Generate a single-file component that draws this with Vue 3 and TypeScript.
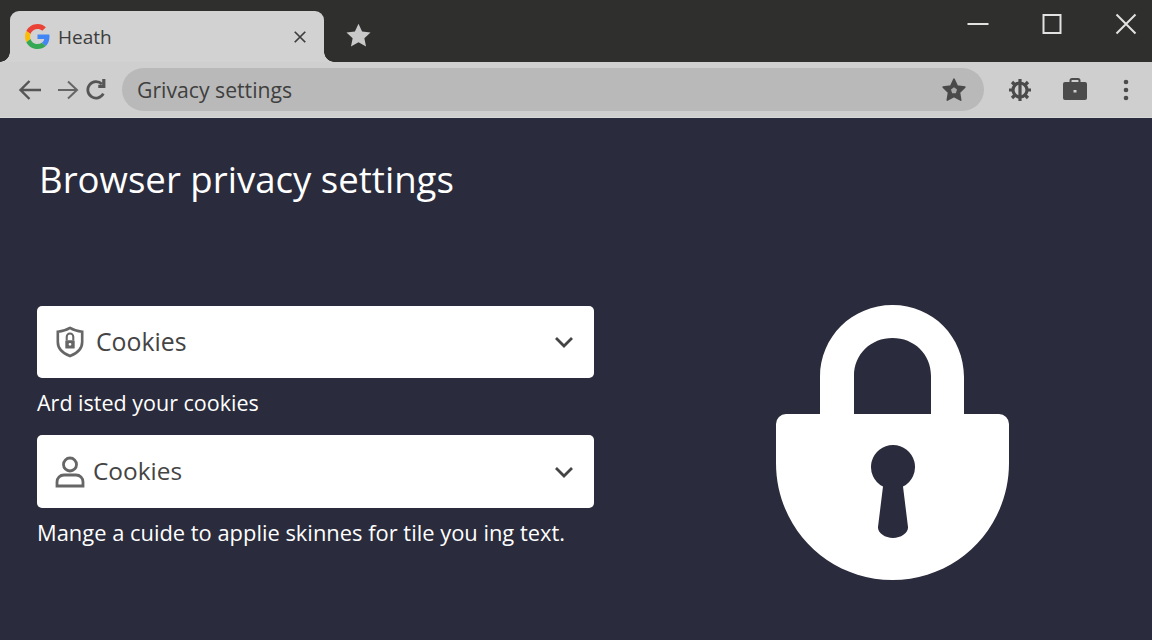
<template>
  <div class="page">
    <header class="titlebar">
      <div class="tab">
        <svg class="favicon" viewBox="0 0 48 48">
          <path fill="#ea4335" d="M24 9.500c3.500 0 6.700 1.200 9.200 3.600l6.900-6.900C35.900 2.400 30.500 0 24 0 14.600 0 6.500 5.400 2.600 13.200l8 6.200C12.500 13.700 17.800 9.500 24 9.500z" />
          <path fill="#4285f4" d="M47 24.500c0-1.600-.1-3.100-.4-4.500H24v9h13c-.6 3-2.300 5.500-4.800 7.200l7.700 6C44.400 38 47 31.800 47 24.500z" />
          <path fill="#fbbc05" d="M10.500 28.600c-.5-1.400-.8-3-.8-4.600s.3-3.200.8-4.600l-8-6.200C.9 16.500 0 20.100 0 24s.9 7.500 2.600 10.800l7.900-6.200z" />
          <path fill="#34a853" d="M24 48c6.500 0 11.900-2.100 15.900-5.800l-7.700-6c-2.200 1.500-4.900 2.300-8.200 2.300-6.200 0-11.500-4.200-13.400-9.900l-8 6.200C6.500 42.600 14.600 48 24 48z" />
        </svg>
        <span class="tab-title">Heath</span>
        <svg class="tab-close" viewBox="0 0 16 16">
          <path d="M2 2l12 12M14 2L2 14" />
        </svg>
      </div>
      <svg class="new-star" viewBox="0 0 24 24">
        <path d="M12 1.500l3.200 6.900 7.500.9-5.500 5.100 1.500 7.400-6.700-3.700-6.700 3.700 1.500-7.400-5.500-5.100 7.500-.9z" />
      </svg>
      <div class="window-controls">
        <svg viewBox="0 0 24 24" class="win-icon"><path d="M1.500 12h21" /></svg>
        <svg viewBox="0 0 24 24" class="win-icon"><rect x="3.500" y="3" width="17" height="18" /></svg>
        <svg viewBox="0 0 24 24" class="win-icon"><path d="M2.500 2.500l19 19M21.500 2.500l-19 19" /></svg>
      </div>
    </header>

    <nav class="toolbar">
      <div class="nav-buttons">
        <svg class="nav-icon" viewBox="0 0 24 24"><path d="M23 12H3M11.500 3L2.500 12l9 9" /></svg>
        <svg class="nav-icon light" viewBox="0 0 24 24"><path d="M3 12h19M13 3.500l9 8.500-9 8.500" /></svg>
        <svg class="nav-icon reload" viewBox="0 0 24 24"><path d="M18.500 5.500A9 9 0 1 0 20 16" /><path class="flag" d="M20.500 0v8h-6" /></svg>
      </div>
      <div class="address">
        <span class="address-text">Grivacy settings</span>
        <svg class="address-star" viewBox="0 0 24 24">
          <path d="M12 2l3 6.300 7 1-5 5 1.200 7-6.200-3.200-6.200 3.200 1.200-7-5-5 7-1z" />
          <path class="star-hole" d="M12 9.500l-2.800 2.100 1.100 3.400h3.400l1.100-3.400z" />
        </svg>
      </div>
      <div class="toolbar-actions">
        <svg class="action gear" viewBox="0 0 24 24">
          <circle cx="12" cy="12" r="7" />
          <path d="M12 1v22M1 12h3.500M19.500 12H23M4 4l3 3M20 4l-3 3M4 20l3-3M20 20l-3-3" />
        </svg>
        <svg class="action case" viewBox="0 0 26 26">
          <path class="handle" d="M8.500 6V3.500a1.500 1.500 0 0 1 1.500-1.500h6a1.500 1.500 0 0 1 1.500 1.500V6" />
          <path fill-rule="evenodd" d="M3 5h20a2 2 0 0 1 2 2v14a2 2 0 0 1-2 2H3a2 2 0 0 1-2-2V7a2 2 0 0 1 2-2zM11.500 13v2.500h3V13z" />
        </svg>
        <svg class="action dots" viewBox="0 0 6 22">
          <circle cx="3" cy="3" r="2.300" />
          <circle cx="3" cy="11" r="2.300" />
          <circle cx="3" cy="19" r="2.300" />
        </svg>
      </div>
    </nav>

    <main class="content">
      <section class="settings">
        <h1 class="heading">Browser privacy settings</h1>
        <div class="card">
          <svg class="card-icon shield" viewBox="0 0 32 34">
            <path class="line" d="M16 2c4 2.500 8 3.500 13 4v11c0 7-5 12-13 15C8 29 3 24 3 17V6c5-.5 9-1.500 13-4z" />
            <path class="line thin" d="M12.500 15v-3.500a3.500 3.500 0 0 1 7 0v3.500" />
            <path class="solid" fill-rule="evenodd" d="M12 15h8a1 1 0 0 1 1 1v7a1 1 0 0 1-1 1h-8a1 1 0 0 1-1-1v-7a1 1 0 0 1 1-1zM16 18a1.500 1.500 0 1 0 0 3a1.500 1.500 0 0 0 0-3z" />
          </svg>
          <span class="card-label">Cookies</span>
          <svg class="chevron" viewBox="0 0 20 12"><path d="M2 2l8 8 8-8" /></svg>
        </div>
        <p class="hint">Ard isted your cookies</p>
        <div class="card second">
          <svg class="card-icon person" viewBox="0 0 30 32">
            <circle class="line" cx="15" cy="8.500" r="6.500" />
            <path class="line" d="M9 19h12c4 0 7 3 7 7v4H2v-4c0-4 3-7 7-7z" />
          </svg>
          <span class="card-label">Cookies</span>
          <svg class="chevron" viewBox="0 0 20 12"><path d="M2 2l8 8 8-8" /></svg>
        </div>
        <p class="hint wide">Mange a cuide to applie skinnes for tile you ing text.</p>
      </section>

      <svg class="padlock" viewBox="0 0 233 275">
        <path fill-rule="evenodd" d="M44 110V72C44 32 76 0 116.500 0S188 32 188 72v38h-33V71c0-22-17-38-38.500-38S78 49 78 71v39z" />
        <path fill-rule="evenodd" d="M10 109h213a10 10 0 0 1 10 10v39c0 65-52 117-116.500 117S0 223 0 158v-39a10 10 0 0 1 10-10zM117 140a22 22 0 0 0-10 41.600L102 222c-.5 6 7 11 15 11s15.500-5 15-11l-5-40.400A22 22 0 0 0 117 140z" />
      </svg>
    </main>
  </div>
</template>

<script setup lang="ts">
</script>

<style>
html,
body {
  margin: 0;
  background: #2a2b3c;
}
</style>

<style scoped>
.page {
  width: 1152px;
  height: 640px;
  display: flex;
  flex-direction: column;
  overflow: hidden;
  background: #2a2b3c;
  font-family: "Open Sans", "Noto Sans", sans-serif;
}

.titlebar {
  height: 62px;
  flex-shrink: 0;
  display: flex;
  align-items: flex-end;
  padding-left: 10px;
  background: #2f2f2e;
}

.tab {
  position: relative;
  width: 314px;
  height: 51px;
  box-sizing: border-box;
  display: flex;
  align-items: center;
  padding: 0 17px 0 15px;
  border-radius: 9px 9px 0 0;
  background: #d2d2d2;
  color: #3c3c3c;
}

.tab::before,
.tab::after {
  content: "";
  position: absolute;
  bottom: 0;
  width: 10px;
  height: 10px;
}

.tab::before {
  left: -10px;
  background: radial-gradient(circle at 0 0, transparent 9.500px, #d2d2d2 10px);
}

.tab::after {
  right: -10px;
  background: radial-gradient(circle at 100% 0, transparent 9.500px, #d2d2d2 10px);
}

.favicon {
  width: 25px;
  height: 25px;
  flex-shrink: 0;
}

.tab-title {
  margin-left: 8px;
  font-size: 19px;
}

.tab-close {
  width: 14px;
  height: 14px;
  margin-left: auto;
  fill: none;
  stroke: #3d3d3d;
  stroke-width: 2;
}

.new-star {
  width: 27px;
  height: 27px;
  margin: 0 0 13px 21px;
  fill: #c9c9c9;
}

.window-controls {
  margin: 0 14px 26px auto;
  display: flex;
  gap: 50px;
}

.win-icon {
  width: 24px;
  height: 24px;
  fill: none;
  stroke: #e2e2e2;
  stroke-width: 2;
}

.toolbar {
  height: 56px;
  flex-shrink: 0;
  box-sizing: border-box;
  display: flex;
  align-items: center;
  padding: 0 15px 0 18px;
  border-bottom: 1px solid #d8d8d8;
  background: #cfcfcf;
}

.nav-buttons {
  width: 104px;
  display: flex;
  align-items: center;
  gap: 13px;
}

.nav-icon {
  width: 24px;
  height: 24px;
  flex-shrink: 0;
  fill: none;
  stroke: #555;
  stroke-width: 2.400;
}

.nav-icon.light {
  stroke: #666;
  stroke-width: 2;
}

.nav-icon.reload {
  width: 22px;
  height: 22px;
  margin-left: -7px;
  stroke-width: 3;
}

.nav-icon .flag {
  stroke-width: 3.500;
}

.address {
  width: 862px;
  height: 43px;
  box-sizing: border-box;
  display: flex;
  align-items: center;
  justify-content: space-between;
  padding: 0 17px 0 15px;
  border-radius: 22px;
  background: #b9b9b9;
}

.address-text {
  font-size: 21.200px;
  color: #3f3f3f;
}

.address-star {
  width: 26px;
  height: 26px;
  fill: #4a4a4a;
  stroke: #4a4a4a;
  stroke-width: 1.500;
  stroke-linejoin: round;
}

.address-star .star-hole {
  fill: #a9a9a9;
  stroke: none;
}

.toolbar-actions {
  flex: 1;
  display: flex;
  align-items: center;
  padding-left: 24px;
}

.action {
  fill: #4b4b4b;
  flex-shrink: 0;
}

.gear {
  width: 24px;
  height: 24px;
  fill: none;
  stroke: #4b4b4b;
  stroke-width: 3.200;
}

.case {
  width: 26px;
  height: 26px;
  margin-left: 30px;
}

.case .handle {
  fill: none;
  stroke: #4b4b4b;
  stroke-width: 2;
}

.dots {
  width: 6px;
  height: 22px;
  margin-left: 35px;
}

.content {
  flex: 1;
  display: flex;
  align-items: flex-start;
  padding-left: 37px;
}

.settings {
  width: 557px;
  flex-shrink: 0;
  display: flex;
  flex-direction: column;
}

.heading {
  margin: 35px 0 101px 2px;
  font-size: 36.600px;
  font-weight: 400;
  line-height: 52px;
  color: #fff;
}

.card {
  height: 72px;
  box-sizing: border-box;
  display: flex;
  align-items: center;
  padding: 0 20px 0 18px;
  border-radius: 5px;
  background: #fff;
}

.card.second {
  height: 73px;
}

.card-icon {
  flex-shrink: 0;
}

.shield {
  width: 30px;
  height: 32px;
}

.person {
  width: 30px;
  height: 32px;
}

.card-icon .line {
  fill: none;
  stroke: #666;
  stroke-width: 2.800;
}

.card-icon .thin {
  stroke-width: 2.200;
}

.card-icon .solid {
  fill: #666;
}

.card-label {
  margin: 0 0 2px 11px;
  font-size: 24.800px;
  color: #444;
}

.second .card-label {
  margin: 0 0 3px 8px;
  font-size: 24.400px;
}

.chevron {
  width: 20px;
  height: 12px;
  margin-left: auto;
  fill: none;
  stroke: #444;
  stroke-width: 2.800;
}

.hint {
  margin: 0;
  height: 57px;
  padding-top: 10px;
  box-sizing: border-box;
  font-size: 21.500px;
  line-height: 30px;
  color: #fff;
}

.hint.wide {
  font-size: 21.900px;
}

.padlock {
  width: 233px;
  height: 275px;
  margin: 187px 0 0 182px;
  flex-shrink: 0;
  fill: #fff;
}
</style>
